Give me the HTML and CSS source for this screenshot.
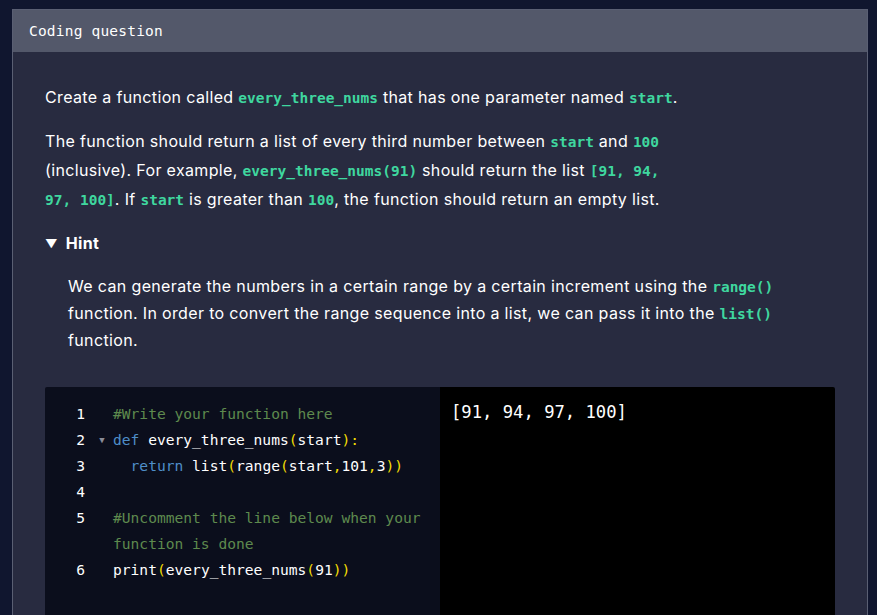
FILE: index.html
```html
<!DOCTYPE html>
<html>
<head>
<meta charset="utf-8">
<link rel="stylesheet" href="styles.css">
</head>
<body>
<div class="card">
  <div class="card-head">Coding question</div>
  <div class="card-body">
    <p class="para">Create a function called <code>every_three_nums</code> that has one parameter named <code>start</code>.</p>
    <p class="para">The function should return a list of every third number between <code>start</code> and <code>100</code> (inclusive). For example, <code>every_three_nums(91)</code> should return the list <code>[91, 94, 97, 100]</code>. If <code>start</code> is greater than <code>100</code>, the function should return an empty list.</p>
    <div class="hint">
      <div class="hint-title"><span class="tri">▼</span>Hint</div>
      <p class="hint-body">We can generate the numbers in a certain range by a certain increment using the <code>range()</code> function. In order to convert the range sequence into a list, we can pass it into the <code>list()</code> function.</p>
    </div>
    <div class="editor">
      <div class="code">
        <div class="ln"><span class="num">1</span><span class="fold"></span><span class="src"><span class="cm">#Write your function here</span></span></div>
        <div class="ln"><span class="num">2</span><span class="fold">▼</span><span class="src"><span class="kw">def</span> every_three_nums<span class="p">(</span>start<span class="p">)</span><span class="p">:</span></span></div>
        <div class="ln"><span class="num">3</span><span class="fold"></span><span class="src">  <span class="kw">return</span> list<span class="p">(</span>range<span class="p">(</span>start<span class="p">,</span>101<span class="p">,</span>3<span class="p">))</span></span></div>
        <div class="ln"><span class="num">4</span><span class="fold"></span><span class="src"></span></div>
        <div class="ln"><span class="num">5</span><span class="fold"></span><span class="src"><span class="cm">#Uncomment the line below when your function is done</span></span></div>
        <div class="ln"><span class="num">6</span><span class="fold"></span><span class="src">print<span class="p">(</span>every_three_nums<span class="p">(</span>91<span class="p">))</span></span></div>
      </div>
      <div class="output">[91, 94, 97, 100]</div>
    </div>
  </div>
</div>
</body>
</html>
```
FILE: styles.css
```css
html, body {
  margin: 0;
  padding: 0;
  background: #10162f;
  height: 100%;
  overflow: hidden;
}
body {
  padding: 9px 9px 0 12px;
  box-sizing: border-box;
  font-family: "Inter", "Liberation Sans", sans-serif;
}
.card {
  background: #282b40;
  border: 1px solid #5a5f73;
  border-bottom: none;
  width: 856px;
  box-sizing: border-box;
  height: 606px;
  overflow: hidden;
}
.card-head {
  background: #53586a;
  height: 42px;
  display: flex;
  align-items: center;
  padding-left: 16px;
  color: #ffffff;
  font-family: "DejaVu Sans Mono", monospace;
  font-size: 14.5px;
  letter-spacing: 0.2px;
}
.card-body {
  padding: 31px 32px 0 32px;
}
.para {
  margin: 0 0 15px 0;
  max-width: 645px;
  color: #ffffff;
  font-size: 16px;
  letter-spacing: 0.35px;
  line-height: 29px;
}
code {
  font-family: "DejaVu Sans Mono", monospace;
  font-weight: bold;
  font-size: 14.5px;
  line-height: 1;
  letter-spacing: 0;
  color: #3fd79f;
}
.hint {
  margin-top: 15px;
}
.hint-title {
  color: #ffffff;
  font-weight: bold;
  font-size: 16px;
  letter-spacing: 0.3px;
  line-height: 29px;
  display: flex;
  align-items: center;
}
.tri {
  font-size: 12px;
  margin-right: 8px;
}
.hint-body {
  margin: 15px 0 0 23px;
  max-width: 720px;
  color: #ffffff;
  font-size: 16px;
  letter-spacing: 0.35px;
  line-height: 27px;
}
.editor {
  margin-top: 33px;
  display: flex;
  height: 320px;
  border-radius: 2px 2px 0 0;
  overflow: hidden;
}
.code {
  width: 395px;
  background: #0b0e1c;
  padding-top: 14px;
  font-family: "DejaVu Sans Mono", monospace;
  font-size: 14.6px;
  line-height: 26px;
  color: #ffffff;
}
.ln {
  display: flex;
  align-items: flex-start;
}
.num {
  width: 40px;
  text-align: right;
  flex: none;
  color: #ffffff;
}
.fold {
  width: 28px;
  flex: none;
  font-size: 9px;
  color: #8a8d98;
  text-align: center;
  padding-left: 6px;
  box-sizing: border-box;
}
.src {
  white-space: pre-wrap;
  flex: 1;
  padding-right: 14px;
}
.cm { color: #5e8a4e; }
.kw { color: #4f8ec9; }
.p { color: #f2dc03; }
.output {
  flex: 1;
  background: #000000;
  color: #ffffff;
  font-family: "DejaVu Sans Mono", monospace;
  font-size: 17.2px;
  padding: 13px 11px;
  line-height: 24px;
}
```
